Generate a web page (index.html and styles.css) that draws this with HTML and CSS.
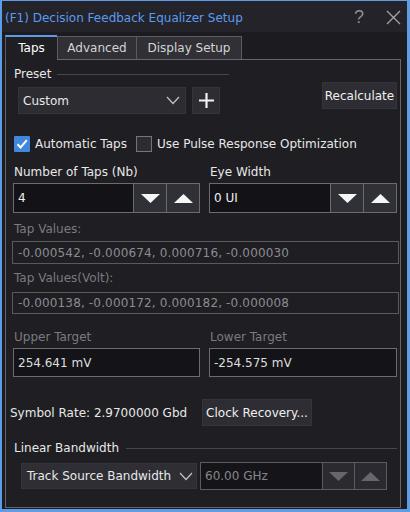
FILE: index.html
```html
<!DOCTYPE html>
<html>
<head>
<meta charset="utf-8">
<link rel="stylesheet" href="styles.css">
</head>
<body>
<div class="window">
  <div class="titlebar">
    <span class="title">(F1) Decision Feedback Equalizer Setup</span>
    <span class="help">?</span>
    <svg class="close" width="15" height="15" viewBox="0 0 15 15"><path d="M1 1L14 14M14 1L1 14" stroke="#a4a4a4" stroke-width="1.3" fill="none"/></svg>
  </div>
  <div class="body">
    <div class="tabs">
      <div class="tab active">Taps</div>
      <div class="tab tab-adv">Advanced</div>
      <div class="tab tab-disp">Display Setup</div>
    </div>
    <div class="panel">
      <div class="group-head preset-head"><span>Preset</span><i class="rule"></i></div>
      <div class="preset-row">
        <div class="combo preset-combo"><span>Custom</span>
          <svg class="chev" width="14" height="9" viewBox="0 0 14 9"><path d="M1 1L7 7.5L13 1" stroke="#c4c4c4" stroke-width="1.2" fill="none"/></svg>
        </div>
        <div class="btn plus"><svg width="15" height="15" viewBox="0 0 15 15"><path d="M7.5 0V15M0 7.5H15" stroke="#f2f2f2" stroke-width="2.2"/></svg></div>
        <div class="btn recalc">Recalculate</div>
      </div>
      <div class="checks">
        <span class="check on"><svg width="16" height="16" viewBox="0 0 16 16"><path d="M3.5 8.2L6.6 11.4L12.8 4.2" stroke="#ffffff" stroke-width="2" fill="none"/></svg></span>
        <span class="check-label">Automatic Taps</span>
        <span class="check off"></span>
        <span class="check-label">Use Pulse Response Optimization</span>
      </div>
      <div class="grid2 taps-grid">
        <div class="label">Number of Taps (Nb)</div>
        <div class="label">Eye Width</div>
        <div class="spin">
          <div class="spin-input">4</div>
          <div class="spin-btn"><svg width="19" height="9" viewBox="0 0 19 9"><path d="M0 0H19L9.5 9Z" fill="#f6f6f6"/></svg></div>
          <div class="spin-btn"><svg width="19" height="9" viewBox="0 0 19 9"><path d="M0 9H19L9.5 0Z" fill="#f6f6f6"/></svg></div>
        </div>
        <div class="spin">
          <div class="spin-input">0 UI</div>
          <div class="spin-btn"><svg width="19" height="9" viewBox="0 0 19 9"><path d="M0 0H19L9.5 9Z" fill="#f6f6f6"/></svg></div>
          <div class="spin-btn"><svg width="19" height="9" viewBox="0 0 19 9"><path d="M0 9H19L9.5 0Z" fill="#f6f6f6"/></svg></div>
        </div>
      </div>
      <div class="label dim tv-label">Tap Values:</div>
      <div class="ro-box">-0.000542, -0.000674, 0.000716, -0.000030</div>
      <div class="label dim tvv-label">Tap Values(Volt):</div>
      <div class="ro-box volt">-0.000138, -0.000172, 0.000182, -0.000008</div>
      <div class="grid2 target-grid">
        <div class="label dim">Upper Target</div>
        <div class="label dim">Lower Target</div>
        <div class="target">254.641 mV</div>
        <div class="target">-254.575 mV</div>
      </div>
      <div class="symbol-row">
        <span class="symbol">Symbol Rate: 2.9700000 Gbd</span>
        <div class="btn clock">Clock Recovery...</div>
      </div>
      <div class="group-head bw-head"><span>Linear Bandwidth</span><i class="rule"></i></div>
      <div class="bw-row">
        <div class="combo bw-combo"><span>Track Source Bandwidth</span>
          <svg class="chev" width="14" height="9" viewBox="0 0 14 9"><path d="M1 1L7 7.5L13 1" stroke="#c4c4c4" stroke-width="1.2" fill="none"/></svg>
        </div>
        <div class="spin disabled">
          <div class="spin-input">60.00 GHz</div>
          <div class="spin-btn"><svg width="19" height="9" viewBox="0 0 19 9"><path d="M0 0H19L9.5 9Z" fill="#66666b"/></svg></div>
          <div class="spin-btn"><svg width="19" height="9" viewBox="0 0 19 9"><path d="M0 9H19L9.5 0Z" fill="#66666b"/></svg></div>
        </div>
      </div>
    </div>
  </div>
</div>
</body>
</html>
```
FILE: styles.css
```css
* { box-sizing: border-box; }
html, body { margin: 0; padding: 0; }
body {
  background: #1b1b20;
  font-family: "DejaVu Sans", sans-serif;
  font-size: 12px;
  line-height: 16px;
  color: #e8e8e8;
}
.window {
  width: 410px;
  height: 512px;
  border-style: solid;
  border-color: #5d9ce6;
  border-width: 1px 3px 3px 2px;
  display: flex;
  flex-direction: column;
  background: #1b1b20;
}
.titlebar {
  height: 31px;
  background: #232329;
  display: flex;
  align-items: center;
  padding: 0 6px 0 3px;
}
.title {
  color: #5b9bef;
  flex: 1;
  margin-top: 2px;
}
.help {
  color: #8e8e8e;
  font-family: "Liberation Sans", Arial, sans-serif;
  font-size: 18px;
  margin-right: 22px;
  margin-top: 1px;
}
.close { display: block; margin-top: 2px; }
.body {
  flex: 1;
  display: flex;
  flex-direction: column;
  padding: 3px 6px 1px 3px;
}
.tabs {
  display: flex;
  align-items: flex-end;
  height: 24px;
}
.tab {
  height: 23px;
  background: #303036;
  border: 1px solid #5c5c60;
  border-bottom: none;
  color: #d4d4d4;
  display: flex;
  align-items: center;
  justify-content: center;
}
.tab.active {
  height: 25px;
  width: 52px;
  background: #1e1e23;
  color: #ffffff;
  border-top: 2px solid #5d9ce6;
  border-left: 1px solid #5c5c60;
  border-right: none;
  margin-bottom: -1px;
  position: relative;
  z-index: 1;
  padding-bottom: 1px;
}
.tab-adv { width: 80px; }
.tab-disp { width: 105px; border-left: none; }
.panel {
  flex: 1;
  background: #1e1e23;
  border: 1px solid #66666a;
  padding: 0 3px 0 7px;
}
.group-head {
  display: flex;
  align-items: center;
  height: 16px;
  margin-left: 1px;
}
.group-head .rule {
  flex: 1;
  height: 1px;
  background: #46464b;
  margin-left: 6px;
}
.preset-head { margin-top: 6px; width: 215px; }
.preset-row {
  display: flex;
  align-items: flex-start;
}
.combo {
  background: #2c2c32;
  border: 1px solid #34343a;
  display: flex;
  align-items: center;
  justify-content: space-between;
  color: #e8e8e8;
}
.preset-combo {
  margin-top: 5px;
  margin-left: 5px;
  width: 168px;
  height: 27px;
  padding: 0 5px 0 4px;
}
.btn {
  background: #2d2d33;
  border: 1px solid #34343a;
  display: flex;
  align-items: center;
  justify-content: center;
  color: #f0f0f0;
}
.plus {
  margin-top: 5px;
  margin-left: 6px;
  width: 28px;
  height: 27px;
}
.recalc {
  margin-left: auto;
  width: 75px;
  height: 27px;
}
.checks {
  display: flex;
  align-items: center;
  margin-top: 22px;
  height: 16px;
}
.check {
  width: 16px;
  height: 16px;
  display: block;
}
.check.on {
  margin-left: 1px;
  background: #3f88dc;
  border-radius: 1px;
}
.check.on svg { display: block; }
.check.off {
  margin-left: 9px;
  background: #2c2c32;
  border: 1px solid #74747a;
}
.check-label { margin-left: 5px; }
.grid2 {
  display: grid;
  grid-template-columns: 187px 1fr;
  column-gap: 9px;
}
.taps-grid {
  margin-top: 12px;
  row-gap: 3px;
}
.label { margin-left: 1px; height: 16px; }
.label.dim { color: #7b7b7f; }
.spin {
  display: flex;
  height: 30px;
  border: 1px solid #6c6c70;
}
.spin-input {
  flex: 1;
  background: #131317;
  display: flex;
  align-items: center;
  padding-left: 4px;
  color: #f0f0f0;
}
.spin-btn {
  width: 33px;
  background: #303037;
  border-left: 1px solid #6c6c70;
  display: flex;
  align-items: center;
  justify-content: center;
}
.spin-btn svg { display: block; }
.tv-label { margin-top: 8px; }
.tvv-label { margin-top: 6px; }
.ro-box {
  margin: 4px -2px 0 -1px;
  height: 23px;
  border: 1px solid #5a5a5e;
  color: #8c8c90;
  display: flex;
  align-items: center;
  padding-left: 5px;
  letter-spacing: 0.15px;
}
.ro-box.volt { margin-top: 6px; height: 22px; }
.target-grid {
  margin-top: 15px;
  row-gap: 3px;
}
.target {
  height: 29px;
  background: #141418;
  border: 1px solid #6c6c70;
  display: flex;
  align-items: center;
  padding-left: 4px;
  color: #dedede;
}
.symbol-row {
  display: flex;
  align-items: center;
  margin-top: 22px;
  margin-left: -3px;
}
.symbol { width: 192px; }
.clock {
  width: 110px;
  height: 27px;
}
.bw-head { margin-top: 14px; }
.bw-head .rule { margin-left: 7px; }
.bw-row {
  display: flex;
  align-items: center;
  margin-top: 6px;
}
.bw-combo {
  margin-left: 8px;
  width: 176px;
  height: 26px;
  background: #2e2e34;
  padding: 0 3px 0 5px;
}
.spin.disabled {
  margin-left: 3px;
  width: 187px;
  height: 28px;
  border-color: #5c5c60;
}
.spin.disabled .spin-input {
  background: #151519;
  color: #86868a;
}
.spin.disabled .spin-btn {
  width: 32px;
  background: #2a2a30;
  border-left-color: #5c5c60;
}
```
